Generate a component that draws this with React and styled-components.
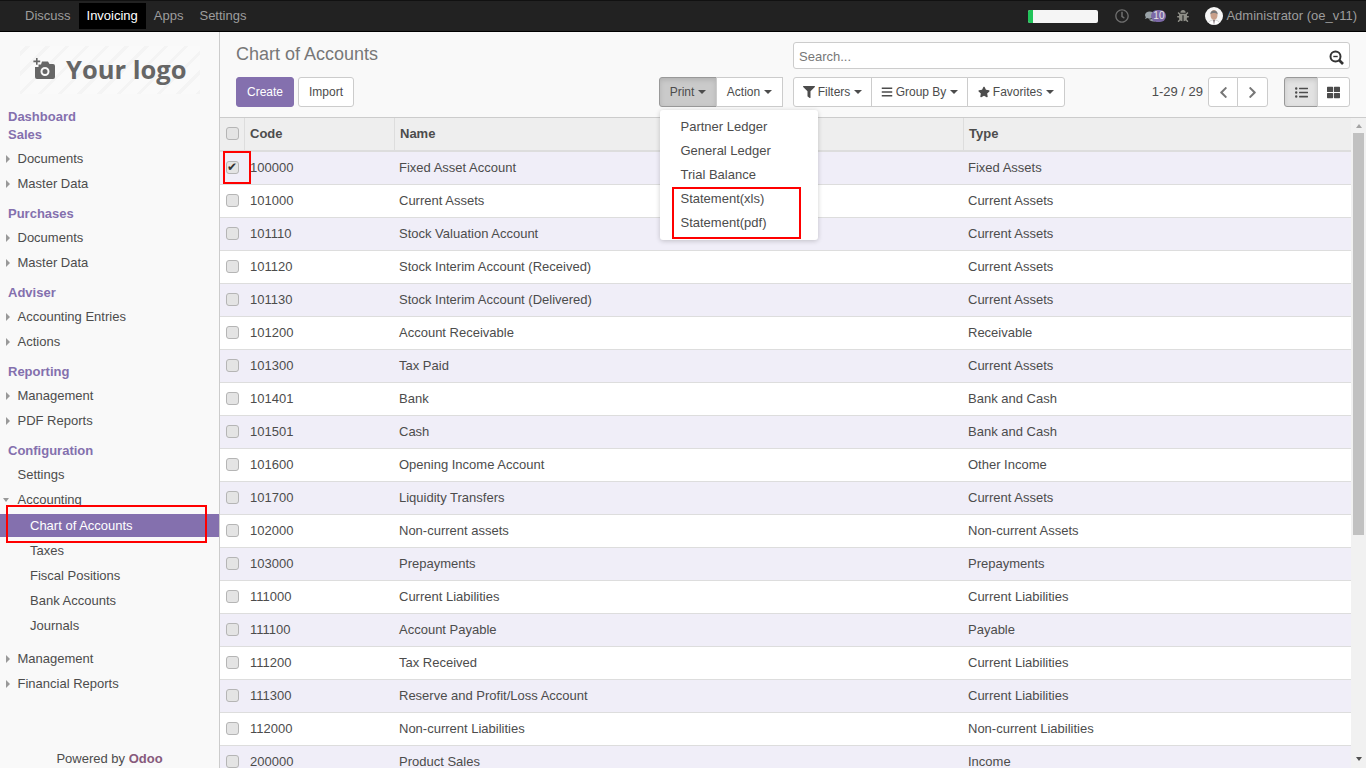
import React from 'react'
import styled, { createGlobalStyle } from 'styled-components'
import { FaRegClock, FaComments, FaBug, FaFilter, FaBars, FaStar, FaChevronLeft, FaChevronRight, FaListUl, FaThLarge } from 'react-icons/fa'

const Global = createGlobalStyle`
  html, body { margin: 0; height: 100%; overflow: hidden; }
  body { font: 13px/18px "Liberation Sans", Arial, sans-serif; color: #4c4c4c; background: #f9f9f9; }
  * { box-sizing: border-box; }
`

const Page = styled.div`
  position: relative;
  height: 768px;
  display: flex;
  flex-direction: column;
`

const TopBar = styled.header`
  height: 32px;
  flex: none;
  display: flex;
  align-items: center;
  padding: 0 9px 0 17px;
  background: #222;
  border-top: 1px solid #111;
  border-bottom: 1px solid #000;
  color: #9d9d9d;
`

const AppLink = styled.a`
  height: 26px;
  padding: 0 8px;
  line-height: 26px;
  color: ${p => (p.$active ? '#fff' : '#9d9d9d')};
  background: ${p => (p.$active ? '#000' : 'transparent')};
`

const Systray = styled.div`
  margin-left: auto;
  display: flex;
  align-items: center;
`

const Progress = styled.div`
  width: 70px;
  height: 13px;
  border-radius: 2px;
  overflow: hidden;
  background: #f5f5f5;
  margin-right: 17px;
  &::before {
    content: '';
    display: block;
    width: 5px;
    height: 100%;
    background: #21c45a;
  }
`

const TrayIcon = styled.span`
  display: flex;
  align-items: center;
  position: relative;
  margin-right: ${p => p.$gap}px;
  font-size: ${p => p.$size}px;
  color: ${p => p.$color};
`

const Badge = styled.span`
  position: relative;
  height: 12px;
  min-width: 14px;
  margin-left: -7px;
  padding: 0 2px;
  border-radius: 6px;
  background: #7c68a6;
  color: #e4e4e4;
  font-size: 10px;
  line-height: 12px;
  text-align: center;
`

const Avatar = styled.svg`
  width: 18px;
  height: 18px;
  margin-right: 3px;
  border-radius: 50%;
`

const Body = styled.div`
  flex: 1;
  min-height: 0;
  display: flex;
`

const Sidebar = styled.aside`
  width: 220px;
  flex: none;
  display: flex;
  flex-direction: column;
  padding-top: 14px;
  background: #f9f9f9;
  border-right: 1px solid #ccc;
`

const Logo = styled.div`
  width: 180px;
  height: 48px;
  margin: 0 0 13px 20px;
  display: flex;
  align-items: center;
  padding: 0 0 2px 13px;
  gap: 11px;
  color: #666;
  font: 700 25.5px/46px "Open Sans", sans-serif;
  background: repeating-linear-gradient(-45deg, #f4f4f4 0 3px, #fafafa 3px 14px);
`

const SectionTitle = styled.div`
  padding-left: 8px;
  height: 18px;
  line-height: 20px;
  font-weight: 700;
  color: #8470ae;
  margin-top: ${p => (p.$first ? 0 : 8)}px;
  margin-bottom: ${p => (p.$tight ? 0 : 3)}px;
`

const MenuItem = styled.div`
  position: relative;
  height: 25px;
  line-height: 25px;
  padding-left: 17.5px;
  margin-top: ${p => (p.$spaced ? 8 : 0)}px;
  &::before {
    content: '';
    position: absolute;
    display: ${p => (p.$caret ? 'block' : 'none')};
    left: ${p => (p.$caret === 'down' ? 3 : 6)}px;
    top: ${p => (p.$caret === 'down' ? 11 : 9)}px;
    border-style: solid;
    border-color: transparent;
    border-width: ${p => (p.$caret === 'down' ? '4px 3.5px 0' : '4px 0 4px 4px')};
    ${p => (p.$caret === 'down' ? 'border-top-color: #999;' : 'border-left-color: #999;')}
  }
`

const SubMenu = styled.div`
  display: flex;
  flex-direction: column;
  gap: 2px;
  padding: 2px 0 1px;
`

const SubItem = styled.div`
  height: 23px;
  line-height: 23px;
  padding-left: 30px;
  color: ${p => (p.$active ? '#fff' : 'inherit')};
  background: ${p => (p.$active ? '#8470ae' : 'transparent')};
`

const Powered = styled.div`
  margin-top: auto;
  height: 19px;
  text-align: center;
  line-height: 20px;
  b { color: #875a7b; }
`

const Main = styled.main`
  flex: 1;
  min-width: 0;
  display: flex;
  flex-direction: column;
`

const ControlPanel = styled.div`
  flex: none;
  height: 86px;
  padding: 10px 16px 0;
  border-bottom: 1px solid #ccc;
`

const PanelRow = styled.div`
  display: flex;
  align-items: ${p => (p.$center ? 'center' : 'flex-start')};
  margin-bottom: 8px;
`

const Title = styled.h1`
  margin: 0;
  font-size: 18px;
  font-weight: 400;
  line-height: 24px;
  color: #777;
`

const Search = styled.div`
  margin-left: auto;
  width: 557px;
  height: 27px;
  display: flex;
  align-items: center;
  justify-content: space-between;
  padding: 2px 5px 0;
  background: #fff;
  border: 1px solid #ccc;
  border-radius: 3px;
  color: #777;
`

const SearchIcon = styled.svg`
  width: 15px;
  height: 15px;
  margin-top: 1px;
`

const Group = styled.div`
  position: relative;
  display: flex;
  margin-left: ${p => p.$left || 0}px;
`

const pressedBg = { dark: '#cacaca', soft: '#e2e2e2' }

const Btn = styled.button`
  width: ${p => p.$w}px;
  height: 30px;
  padding: 0;
  margin-left: ${p => p.$left || 0}px;
  display: flex;
  align-items: center;
  justify-content: center;
  gap: 3px;
  font: 12px "Liberation Sans", Arial, sans-serif;
  color: ${p => (p.$primary ? '#fff' : '#4c4c4c')};
  background: ${p => (p.$primary ? '#8470ae' : pressedBg[p.$pressed] || '#fff')};
  border: 1px solid ${p => (p.$primary ? '#8470ae' : p.$pressed ? '#999' : '#ccc')};
  border-radius: 3px;
  box-shadow: ${p => (p.$pressed ? 'inset 0 2px 5px rgba(0,0,0,.12)' : 'none')};
  ${Group} > & {
    border-radius: 0;
    margin-left: -1px;
  }
  ${Group} > &:first-child {
    border-radius: 3px 0 0 3px;
    margin-left: 0;
  }
  ${Group} > &:last-child {
    border-radius: 0 3px 3px 0;
  }
  svg { font-size: ${p => p.$icon || 12}px; }
`

const Caret = styled.i`
  border-style: solid;
  border-color: #4c4c4c transparent transparent;
  border-width: 4px 4px 0;
  margin-left: 1px;
`

const Pager = styled.span`
  margin-left: auto;
  margin-right: 5px;
`

const Dropdown = styled.ul`
  position: absolute;
  z-index: 3;
  top: 33px;
  left: 1px;
  width: 158px;
  margin: 0;
  padding: 5px 0;
  list-style: none;
  background: #fff;
  border-radius: 3px;
  box-shadow: 0 1px 5px rgba(0,0,0,.2);
`

const DropdownItem = styled.li`
  height: 24px;
  padding-left: 20.5px;
  line-height: 24px;
  white-space: nowrap;
`

const ListArea = styled.div`
  flex: 1;
  min-height: 0;
  display: flex;
  background: #fff;
`

const TableWrap = styled.div`
  flex: 1;
  min-width: 0;
  overflow: hidden;
`

const ScrollBar = styled.div`
  width: 15px;
  flex: none;
  display: flex;
  flex-direction: column;
  align-items: center;
  padding: 6px 0 7px;
  background: #f1f1f1;
`

const ScrollThumb = styled.div`
  width: 11px;
  height: 402px;
  margin-top: 5px;
  background: #c1c1c1;
`

const ScrollArrow = styled.i`
  border-style: solid;
  border-color: transparent;
  border-width: ${p => (p.$down ? '4px 3.5px 0' : '0 3.5px 4px')};
  ${p => (p.$down ? 'border-top-color: #505050; margin-top: auto;' : 'border-bottom-color: #a3a3a3;')}
`

const Table = styled.table`
  width: 100%;
  table-layout: fixed;
  border-collapse: separate;
  border-spacing: 0;
`

const Head = styled.th`
  width: ${p => (p.$w ? `${p.$w}px` : 'auto')};
  height: 34px;
  padding: 0 0 0 ${p => p.$pad || 5}px;
  text-align: left;
  font-weight: 700;
  background: #eee;
  border-bottom: 2px solid #ddd;
  border-right: 1px solid #ddd;
  &:last-child { border-right: 0; }
`

const Row = styled.tr`
  background: ${p => (p.$odd ? '#f0eef8' : '#fff')};
`

const Cell = styled.td`
  height: 33px;
  padding: 0 0 0 ${p => p.$pad}px;
  border-bottom: 1px solid #ddd;
  white-space: nowrap;
`

const Check = styled.input.attrs({ type: 'checkbox', readOnly: true })`
  appearance: none;
  display: block;
  position: relative;
  width: 12.5px;
  height: 13px;
  margin: -2px 0 0;
  background: #e4e4e4;
  border: 1px solid #b5b5b5;
  border-radius: 3px;
  &:checked::after {
    content: '✔';
    position: absolute;
    left: 0;
    top: -3px;
    font: 700 12px/16px "DejaVu Sans", sans-serif;
    color: #333;
  }
`

const Mark = styled.div`
  position: absolute;
  z-index: 5;
  left: ${p => p.$x}px;
  top: ${p => p.$y}px;
  width: ${p => p.$w}px;
  height: ${p => p.$h}px;
  border: 2px solid #f00;
  pointer-events: none;
`

const menu = [
  { title: 'Purchases', items: ['Documents', 'Master Data'] },
  { title: 'Adviser', items: ['Accounting Entries', 'Actions'] },
  { title: 'Reporting', items: ['Management', 'PDF Reports'] },
]

const subMenu = ['Chart of Accounts', 'Taxes', 'Fiscal Positions', 'Bank Accounts', 'Journals']

const accounts = [
  ['100000', 'Fixed Asset Account', 'Fixed Assets'],
  ['101000', 'Current Assets', 'Current Assets'],
  ['101110', 'Stock Valuation Account', 'Current Assets'],
  ['101120', 'Stock Interim Account (Received)', 'Current Assets'],
  ['101130', 'Stock Interim Account (Delivered)', 'Current Assets'],
  ['101200', 'Account Receivable', 'Receivable'],
  ['101300', 'Tax Paid', 'Current Assets'],
  ['101401', 'Bank', 'Bank and Cash'],
  ['101501', 'Cash', 'Bank and Cash'],
  ['101600', 'Opening Income Account', 'Other Income'],
  ['101700', 'Liquidity Transfers', 'Current Assets'],
  ['102000', 'Non-current assets', 'Non-current Assets'],
  ['103000', 'Prepayments', 'Prepayments'],
  ['111000', 'Current Liabilities', 'Current Liabilities'],
  ['111100', 'Account Payable', 'Payable'],
  ['111200', 'Tax Received', 'Current Liabilities'],
  ['111300', 'Reserve and Profit/Loss Account', 'Current Liabilities'],
  ['112000', 'Non-current Liabilities', 'Non-current Liabilities'],
  ['200000', 'Product Sales', 'Income'],
]

const printItems = ['Partner Ledger', 'General Ledger', 'Trial Balance', 'Statement(xls)', 'Statement(pdf)']

const App = () => (
  <Page>
    <Global />
    <TopBar>
      <AppLink>Discuss</AppLink>
      <AppLink $active>Invoicing</AppLink>
      <AppLink>Apps</AppLink>
      <AppLink>Settings</AppLink>
      <Systray>
        <Progress />
        <TrayIcon $size={14} $gap={16} $color="#6f6f6f"><FaRegClock /></TrayIcon>
        <TrayIcon $size={13} $gap={11} $color="#9aa3a8"><FaComments /><Badge>10</Badge></TrayIcon>
        <TrayIcon $size={12} $gap={16} $color="#8f8f88"><FaBug /></TrayIcon>
        <Avatar viewBox="0 0 18 18">
          <rect width="18" height="18" fill="#f6f6f6" />
          <path d="M3 18c0-3.6 3-5 6-5s6 1.400 6 5z" fill="#fff" stroke="#aaa" strokeWidth=".5" />
          <path d="M8.200 13l.8 5 .8-5z" fill="#6b5a60" />
          <ellipse cx="9" cy="8" rx="3.500" ry="5" fill="#c9a08a" />
          <path d="M5.300 7.500C4.800 2.200 13.200 2.200 12.700 7.500 11.500 5.500 6.500 5.500 5.300 7.500z" fill="#777" />
        </Avatar>
        Administrator (oe_v11)
      </Systray>
    </TopBar>
    <Body>
      <Sidebar>
        <Logo>
          <svg width="22" height="22" viewBox="0 0 22 22" fill="#666">
            <path d="M3 0h1.600v2.600h2.600v1.600H4.600v2.600H3V4.200H.4V2.600H3z" />
            <path fillRule="evenodd" d="M9 3.500h6l1.500 2.500H20a2 2 0 0 1 2 2v11a2 2 0 0 1-2 2H4a2 2 0 0 1-2-2V9h3.500V6.500H8zM12 9a4.500 4.500 0 1 0 0 9 4.500 4.500 0 0 0 0-9zm0 2a2.500 2.500 0 1 1 0 5 2.500 2.500 0 0 1 0-5z" />
          </svg>
          Your logo
        </Logo>
        <SectionTitle $first $tight>Dashboard</SectionTitle>
        <SectionTitle $first>Sales</SectionTitle>
        <MenuItem $caret="right">Documents</MenuItem>
        <MenuItem $caret="right">Master Data</MenuItem>
        {menu.map(section => (
          <React.Fragment key={section.title}>
            <SectionTitle>{section.title}</SectionTitle>
            {section.items.map(item => <MenuItem key={item} $caret="right">{item}</MenuItem>)}
          </React.Fragment>
        ))}
        <SectionTitle>Configuration</SectionTitle>
        <MenuItem>Settings</MenuItem>
        <MenuItem $caret="down">Accounting</MenuItem>
        <SubMenu>
          {subMenu.map((item, i) => <SubItem key={item} $active={i === 0}>{item}</SubItem>)}
        </SubMenu>
        <MenuItem $caret="right" $spaced>Management</MenuItem>
        <MenuItem $caret="right">Financial Reports</MenuItem>
        <Powered>Powered by <b>Odoo</b></Powered>
      </Sidebar>
      <Main>
        <ControlPanel>
          <PanelRow>
            <Title>Chart of Accounts</Title>
            <Search>
              Search...
              <SearchIcon viewBox="0 0 15 15" fill="none" stroke="#333">
                <circle cx="6.500" cy="6.500" r="5" strokeWidth="2" />
                <path d="M4.300 6.500h4.400" strokeWidth="1.400" />
                <path d="M10 10l4 4" strokeWidth="2.600" />
              </SearchIcon>
            </Search>
          </PanelRow>
          <PanelRow $center>
            <Btn $primary $w={58}>Create</Btn>
            <Btn $w={56} $left={4}>Import</Btn>
            <Group $left={305}>
              <Btn $pressed="dark" $w={58}>Print <Caret /></Btn>
              <Btn $w={67}>Action <Caret /></Btn>
              <Dropdown>
                {printItems.map(item => <DropdownItem key={item}>{item}</DropdownItem>)}
              </Dropdown>
            </Group>
            <Group $left={10}>
              <Btn $w={79}><FaFilter />Filters <Caret /></Btn>
              <Btn $w={97}><FaBars />Group By <Caret /></Btn>
              <Btn $w={98}><FaStar />Favorites <Caret /></Btn>
            </Group>
            <Pager>1-29 / 29</Pager>
            <Group>
              <Btn $w={30} $icon={13}><FaChevronLeft color="#777" /></Btn>
              <Btn $w={31} $icon={13}><FaChevronRight color="#777" /></Btn>
            </Group>
            <Group $left={16}>
              <Btn $pressed="soft" $w={34} $icon={13}><FaListUl /></Btn>
              <Btn $w={33} $icon={13}><FaThLarge /></Btn>
            </Group>
          </PanelRow>
        </ControlPanel>
        <ListArea>
          <TableWrap>
            <Table>
              <thead>
                <tr>
                  <Head $w={25} $pad={6}><Check /></Head>
                  <Head $w={150}>Code</Head>
                  <Head $w={569}>Name</Head>
                  <Head>Type</Head>
                </tr>
              </thead>
              <tbody>
                {accounts.map(([code, name, type], i) => (
                  <Row key={code} $odd={i % 2 === 0}>
                    <Cell $pad={6}><Check checked={i === 0} /></Cell>
                    <Cell $pad={5}>{code}</Cell>
                    <Cell $pad={4}>{name}</Cell>
                    <Cell $pad={4}>{type}</Cell>
                  </Row>
                ))}
              </tbody>
            </Table>
          </TableWrap>
          <ScrollBar>
            <ScrollArrow />
            <ScrollThumb />
            <ScrollArrow $down />
          </ScrollBar>
        </ListArea>
      </Main>
    </Body>
    <Mark $x={6} $y={505} $w={201} $h={38} />
    <Mark $x={223} $y={151} $w={28} $h={33} />
    <Mark $x={672} $y={187} $w={129} $h={52} />
  </Page>
)

export default App
